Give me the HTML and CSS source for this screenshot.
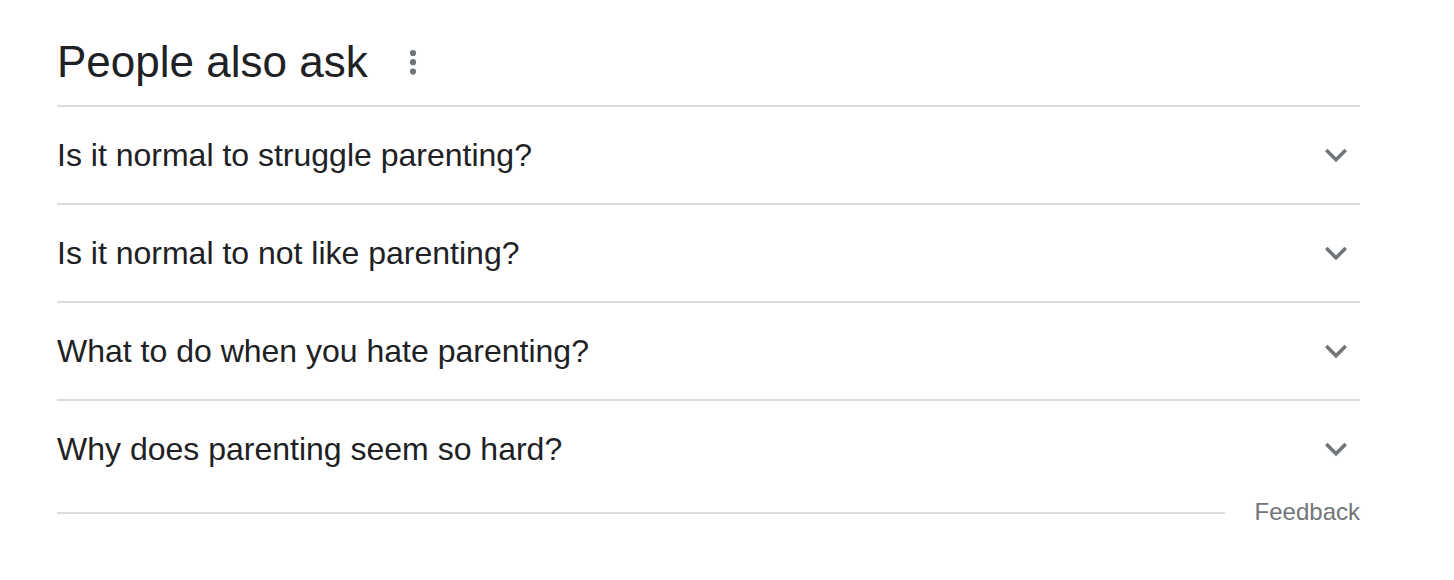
FILE: index.html
```html
<!DOCTYPE html>
<html lang="en">
<head>
<meta charset="utf-8">
<title>People also ask</title>
<link rel="stylesheet" href="styles.css">
</head>
<body>
<div class="paa">
  <div class="paa-head">
    <h2 class="paa-title">People also ask</h2>
    <span class="paa-more" aria-label="More options">
      <svg width="8" height="28" viewBox="0 0 8 28"><circle cx="4" cy="4" r="3.1"/><circle cx="4" cy="13.2" r="3.1"/><circle cx="4" cy="22.6" r="3.1"/></svg>
    </span>
  </div>
  <div class="paa-list">
    <div class="paa-row"><span class="paa-q">Is it normal to struggle parenting?</span><svg class="chev" width="44" height="44" viewBox="0 0 24 24"><path d="M16.59 8.59L12 13.17 7.41 8.59 6 10l6 6 6-6z"/></svg></div>
    <div class="paa-row"><span class="paa-q">Is it normal to not like parenting?</span><svg class="chev" width="44" height="44" viewBox="0 0 24 24"><path d="M16.59 8.59L12 13.17 7.41 8.59 6 10l6 6 6-6z"/></svg></div>
    <div class="paa-row"><span class="paa-q">What to do when you hate parenting?</span><svg class="chev" width="44" height="44" viewBox="0 0 24 24"><path d="M16.59 8.59L12 13.17 7.41 8.59 6 10l6 6 6-6z"/></svg></div>
    <div class="paa-row"><span class="paa-q">Why does parenting seem so hard?</span><svg class="chev" width="44" height="44" viewBox="0 0 24 24"><path d="M16.59 8.59L12 13.17 7.41 8.59 6 10l6 6 6-6z"/></svg></div>
  </div>
  <div class="paa-foot">
    <div class="paa-foot-line"></div>
    <span class="paa-feedback">Feedback</span>
  </div>
</div>
</body>
</html>
```

FILE: styles.css
```css
html, body {
  margin: 0;
  padding: 0;
  background: #ffffff;
}
body {
  font-family: "Liberation Sans", Arial, sans-serif;
  color: #202124;
}
.paa {
  width: 1303px;
  margin-left: 57px;
  padding-top: 36px;
}
.paa-head {
  display: flex;
  align-items: center;
  height: 52px;
  margin-bottom: 17px;
}
.paa-title {
  margin: 0;
  font-size: 44px;
  font-weight: 400;
  line-height: 52px;
  color: #202124;
}
.paa-more {
  display: flex;
  margin-left: 41px;
  margin-top: 2px;
}
.paa-more svg {
  fill: #70757a;
}
.paa-list {
  display: flex;
  flex-direction: column;
}
.paa-row {
  display: flex;
  align-items: center;
  justify-content: space-between;
  height: 96px;
  border-top: 2px solid #dadce0;
}
.paa-q {
  font-size: 32px;
  line-height: 40px;
  color: #202124;
}
.chev {
  fill: #70757a;
  margin-right: 2px;
}
.paa-foot {
  display: flex;
  align-items: center;
  height: 30px;
}
.paa-foot-line {
  flex: 1;
  height: 2px;
  background: #dadce0;
  margin-right: 30px;
  margin-top: 2px;
}
.paa-feedback {
  font-size: 24px;
  line-height: 30px;
  color: #70757a;
}
```
